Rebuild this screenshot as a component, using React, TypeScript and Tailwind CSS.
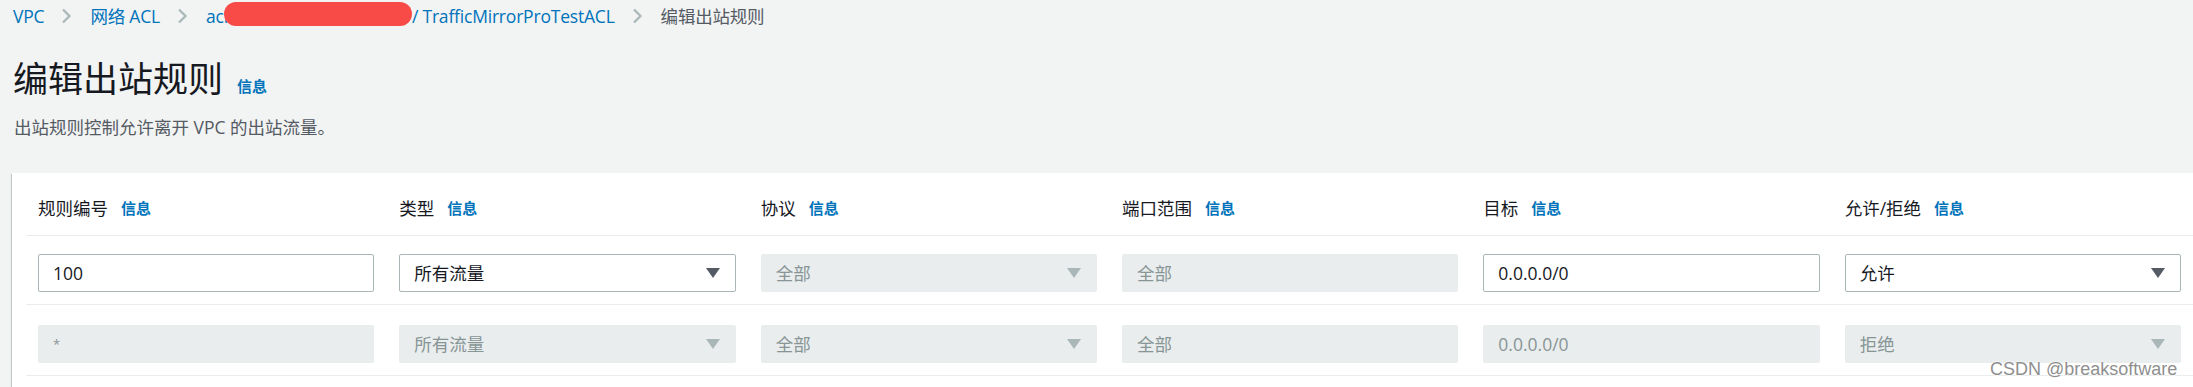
import React from "react";

const COLUMNS = [
  { label: "规则编号" },
  { label: "类型" },
  { label: "协议" },
  { label: "端口范围" },
  { label: "目标" },
  { label: "允许/拒绝" },
];

type Cell = { kind: "input" | "select"; value: string; disabled?: boolean };

const ROWS: { pad: string; cells: Cell[] }[] = [
  {
    pad: "pt-[18px] pb-[12px]",
    cells: [
      { kind: "input", value: "100" },
      { kind: "select", value: "所有流量" },
      { kind: "select", value: "全部", disabled: true },
      { kind: "input", value: "全部", disabled: true },
      { kind: "input", value: "0.0.0.0/0" },
      { kind: "select", value: "允许" },
    ],
  },
  {
    pad: "pt-[20px] pb-[12px]",
    cells: [
      { kind: "input", value: "*", disabled: true },
      { kind: "select", value: "所有流量", disabled: true },
      { kind: "select", value: "全部", disabled: true },
      { kind: "input", value: "全部", disabled: true },
      { kind: "input", value: "0.0.0.0/0", disabled: true },
      { kind: "select", value: "拒绝", disabled: true },
    ],
  },
];

function Chevron() {
  return (
    <svg width="11" height="16" viewBox="0 0 11 16" className="ml-[17px] mr-[18px] shrink-0">
      <path d="M2 1.5 L8.5 8 L2 14.5" fill="none" stroke="#aab7b8" strokeWidth="2.2" />
    </svg>
  );
}

function Info() {
  return <span className="text-[15px] font-bold text-[#0073bb]">信息</span>;
}

function Field({ cell }: { cell: Cell }) {
  const base = cell.disabled
    ? "bg-[#eaeded] border-[#eaeded] text-[#879596]"
    : "bg-white border-[#aab7b8] text-[#16191f]";
  return (
    <div
      className={`relative h-[38px] flex items-center border rounded-[2px] pl-[14px] text-[17.5px] ${base}`}
    >
      {cell.value === "*" ? <span className="text-[13px] mt-[2px]">*</span> : cell.value}
      {cell.kind === "select" && (
        <svg
          width="14"
          height="10"
          viewBox="0 0 14 10"
          className="absolute right-[15px] top-1/2 -translate-y-1/2"
        >
          <polygon points="0,0 14,0 7,10" fill={cell.disabled ? "#aab7b8" : "#545b64"} />
        </svg>
      )}
    </div>
  );
}

export default function App() {
  return (
    <div className="relative w-[2193px] h-[387px] overflow-hidden bg-[#f2f3f3] font-['Open_Sans','Noto_Sans_CJK_SC',sans-serif]">
      {/* Breadcrumbs */}
      <div className="h-[32px] pl-[13px] flex items-center text-[17.5px] tracking-[-0.2px] text-[#0073bb]">
        <span>VPC</span>
        <Chevron />
        <span>网络 ACL</span>
        <Chevron />
        <span>acl</span>
        <span className="inline-block w-[188px] h-[24px] -ml-[4px] mt-[-4px] rounded-[12px] bg-[#f84b48]" />
        <span>/ TrafficMirrorProTestACL</span>
        <Chevron />
        <span className="text-[#545b64]">编辑出站规则</span>
      </div>

      {/* Title */}
      <div className="mt-[25px] pl-[13px] h-[44px] flex items-baseline gap-[14px]">
        <h1 className="text-[35px] leading-[44px] font-normal text-[#16191f]">编辑出站规则</h1>
        <Info />
      </div>
      <p className="mt-[14px] pl-[14px] text-[17.5px] leading-[24px] text-[#545b64]">
        出站规则控制允许离开 VPC 的出站流量。
      </p>

      {/* Rules card */}
      <div className="mt-[34px] ml-[12px] w-[2195px] bg-white px-[14px] pb-[40px] shadow-[0_1px_1px_0_rgba(0,28,36,0.3),-1px_1px_1px_0_rgba(0,28,36,0.15)]">
        <div className="h-[63px] pt-[8px] px-[12px] grid grid-cols-6 gap-[25px] items-center border-b border-[#eaeded]">
          {COLUMNS.map((col) => (
            <div key={col.label} className="flex items-center gap-[13px]">
              <span className="text-[17.5px] text-[#16191f]">{col.label}</span>
              <Info />
            </div>
          ))}
        </div>
        {ROWS.map((row, i) => (
          <div
            key={i}
            className={`px-[12px] grid grid-cols-6 gap-[25px] border-b border-[#eaeded] ${row.pad}`}
          >
            {row.cells.map((cell, j) => (
              <Field key={j} cell={cell} />
            ))}
          </div>
        ))}
      </div>

      {/* Watermark */}
      <div className="absolute left-[1990px] top-[357px] text-[18px] leading-[24px] text-[#8f8f8f] font-['Liberation_Sans',sans-serif] [text-shadow:0_0_2px_#fff,0_0_2px_#fff]">
        CSDN @breaksoftware
      </div>
    </div>
  );
}
